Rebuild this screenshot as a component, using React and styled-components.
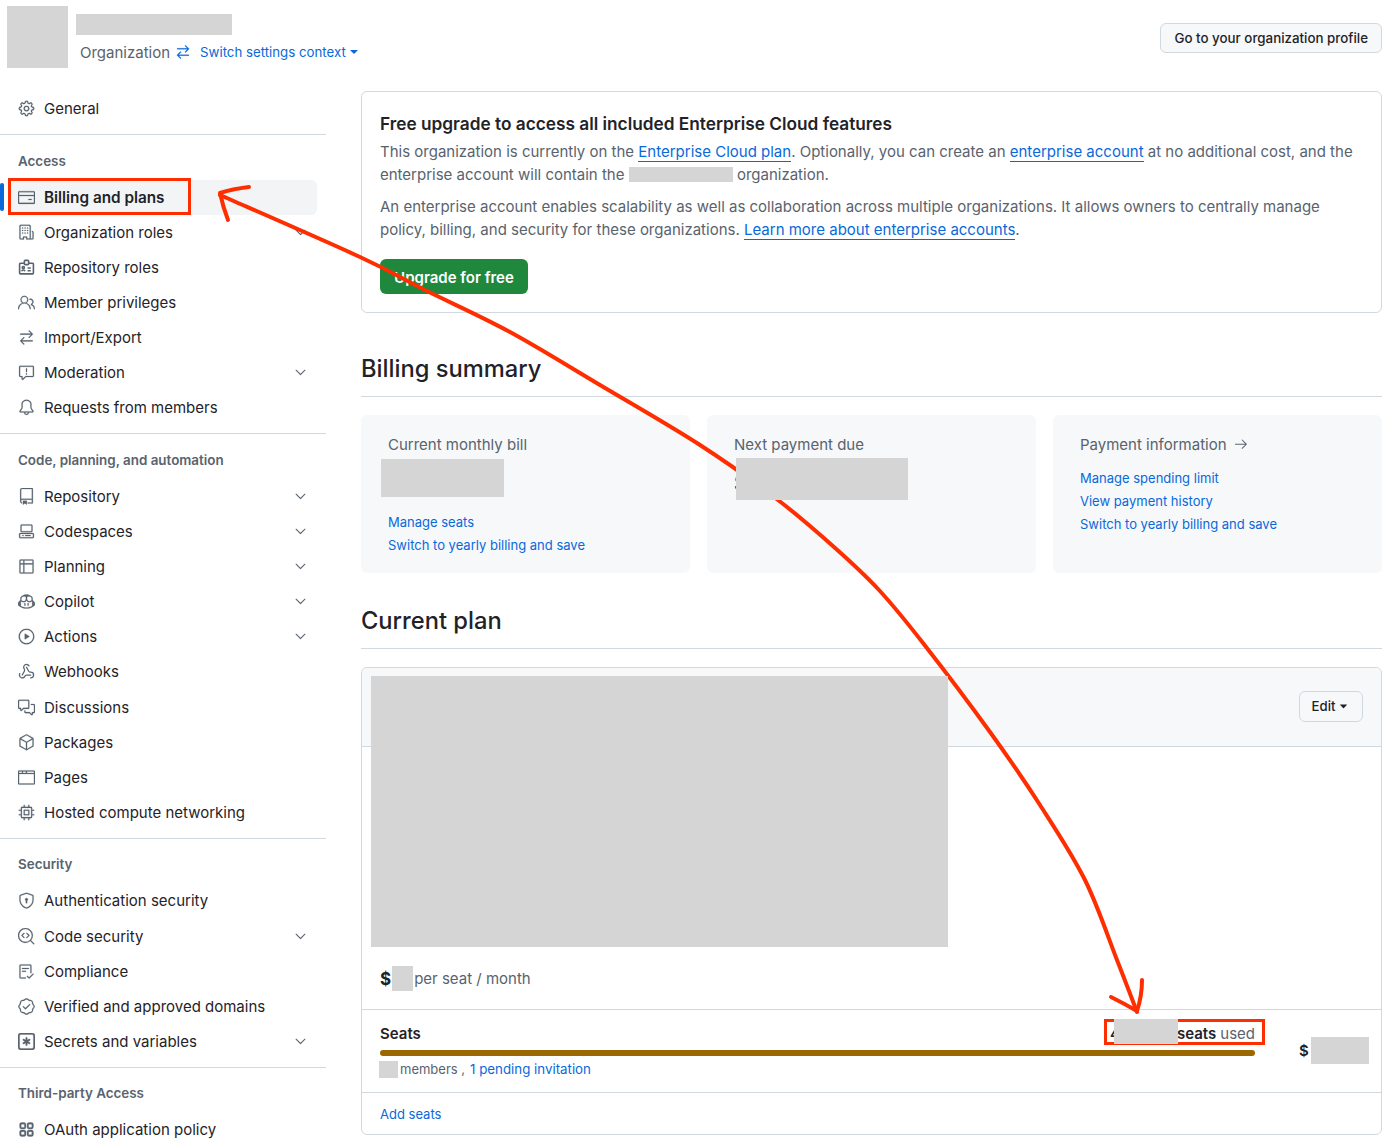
import React from 'react';
import styled, { createGlobalStyle } from 'styled-components';
import { Webhook } from 'lucide-react';
import {
  GoArrowRight,
  GoArrowSwitch,
  GoBell,
  GoBrowser,
  GoChecklist,
  GoChevronDown,
  GoCodescan,
  GoCodespaces,
  GoCommentDiscussion,
  GoCopilot,
  GoCpu,
  GoCreditCard,
  GoGear,
  GoOrganization,
  GoPackage,
  GoPeople,
  GoPlay,
  GoReport,
  GoRepo,
  GoShieldLock,
  GoTable,
  GoTriangleDown,
  GoVerified,
} from 'react-icons/go';

const GlobalStyle = createGlobalStyle`
  body {
    margin: 0;
    background: #fff;
    color: #1f2328;
    font-family: Inter, "Liberation Sans", sans-serif;
    font-size: 15px;
  }
`;

// octicons the icon package does not carry
const AppsIcon = ({ size }) => (
  <svg width={size} height={size} viewBox="0 0 16 16" fill="currentColor">
    <path d="M1.5 3.25c0-.966.784-1.75 1.75-1.75h2.5c.966 0 1.75.784 1.75 1.75v2.5A1.75 1.75 0 0 1 5.75 7.5h-2.5A1.75 1.75 0 0 1 1.5 5.75Zm7 0c0-.966.784-1.75 1.75-1.75h2.5c.966 0 1.75.784 1.75 1.75v2.5a1.75 1.75 0 0 1-1.75 1.75h-2.5A1.75 1.75 0 0 1 8.5 5.75Zm-7 7c0-.966.784-1.75 1.75-1.75h2.5c.966 0 1.75.784 1.75 1.75v2.5a1.75 1.75 0 0 1-1.75 1.75h-2.5a1.75 1.75 0 0 1-1.75-1.75Zm7 0c0-.966.784-1.75 1.75-1.75h2.5c.966 0 1.75.784 1.75 1.75v2.5a1.75 1.75 0 0 1-1.75 1.75h-2.5a1.75 1.75 0 0 1-1.75-1.75ZM3.25 3a.25.25 0 0 0-.25.25v2.5c0 .138.112.25.25.25h2.5A.25.25 0 0 0 6 5.75v-2.5A.25.25 0 0 0 5.75 3Zm7 0a.25.25 0 0 0-.25.25v2.5c0 .138.112.25.25.25h2.5a.25.25 0 0 0 .25-.25v-2.5a.25.25 0 0 0-.25-.25Zm-7 7a.25.25 0 0 0-.25.25v2.5c0 .138.112.25.25.25h2.5a.25.25 0 0 0 .25-.25v-2.5a.25.25 0 0 0-.25-.25Zm7 0a.25.25 0 0 0-.25.25v2.5c0 .138.112.25.25.25h2.5a.25.25 0 0 0 .25-.25v-2.5a.25.25 0 0 0-.25-.25Z" />
  </svg>
);

const KeyAsteriskIcon = ({ size }) => (
  <svg width={size} height={size} viewBox="0 0 16 16" fill="currentColor">
    <path d="M0 2.75A2.75 2.75 0 0 1 2.75 0h10.5A2.75 2.75 0 0 1 16 2.75v10.5A2.75 2.75 0 0 1 13.25 16H2.75A2.75 2.75 0 0 1 0 13.25ZM2.75 1.5c-.69 0-1.25.56-1.25 1.25v10.5c0 .69.56 1.25 1.25 1.25h10.5c.69 0 1.25-.56 1.25-1.25V2.75c0-.69-.56-1.25-1.25-1.25Z" />
    <path d="M8 4a.75.75 0 0 1 .75.75V6.7l1.69-.975a.75.75 0 0 1 .75 1.3L9.5 8l1.69.976a.75.75 0 0 1-.75 1.298L8.75 9.3v1.951a.75.75 0 0 1-1.5 0V9.299l-1.69.976a.75.75 0 0 1-.75-1.3L6.5 8l-1.69-.975a.75.75 0 0 1 .75-1.3l1.69.976V4.75A.75.75 0 0 1 8 4Z" />
  </svg>
);

const IdBadgeIcon = ({ size }) => (
  <svg width={size} height={size} viewBox="0 0 16 16" fill="none" stroke="currentColor" strokeWidth="1.5">
    <path d="M6 4H2.25a.75.75 0 0 0-.75.75v8.5c0 .41.34.75.75.75h11.5c.41 0 .75-.34.75-.75v-8.5a.75.75 0 0 0-.75-.75H10" />
    <rect x="6" y="1.25" width="4" height="4" rx=".75" />
    <circle cx="5" cy="8" r="1" />
    <path d="M3.4 11.6c.3-.9.9-1.2 1.6-1.2s1.3.3 1.6 1.2M9 8.5h3M9 11h3" />
  </svg>
);

const WebhookIcon = ({ size }) => <Webhook size={size} strokeWidth={1.8} />;

// smooth line through the points of a hand-drawn arrow (catmull-rom to bezier)
const smoothPath = (points) => {
  let d = `M${points[0][0]} ${points[0][1]}`;
  for (let i = 0; i < points.length - 1; i++) {
    const p0 = points[i - 1] || points[i];
    const p1 = points[i];
    const p2 = points[i + 1];
    const p3 = points[i + 2] || p2;
    const c1x = p1[0] + (p2[0] - p0[0]) / 6;
    const c1y = p1[1] + (p2[1] - p0[1]) / 6;
    const c2x = p2[0] - (p3[0] - p1[0]) / 6;
    const c2y = p2[1] - (p3[1] - p1[1]) / 6;
    d += ` C${c1x} ${c1y} ${c2x} ${c2y} ${p2[0]} ${p2[1]}`;
  }
  return d;
};

const arrowLine = [
  [220, 195],
  [360, 257],
  [427, 291],
  [510, 332],
  [600, 385],
  [700, 445],
  [778, 500],
  [834, 547],
  [879, 590],
  [923, 643],
  [990, 732],
  [1040, 805],
  [1085, 880],
  [1117, 960],
  [1137, 1012],
];

const navGroups = [
  {
    items: [{ label: 'General', icon: GoGear }],
  },
  {
    title: 'Access',
    items: [
      { label: 'Billing and plans', icon: GoCreditCard, active: true },
      { label: 'Organization roles', icon: GoOrganization, more: true },
      { label: 'Repository roles', icon: IdBadgeIcon },
      { label: 'Member privileges', icon: GoPeople },
      { label: 'Import/Export', icon: GoArrowSwitch },
      { label: 'Moderation', icon: GoReport, more: true },
      { label: 'Requests from members', icon: GoBell },
    ],
  },
  {
    title: 'Code, planning, and automation',
    items: [
      { label: 'Repository', icon: GoRepo, more: true },
      { label: 'Codespaces', icon: GoCodespaces, more: true },
      { label: 'Planning', icon: GoTable, more: true },
      { label: 'Copilot', icon: GoCopilot, more: true },
      { label: 'Actions', icon: GoPlay, more: true },
      { label: 'Webhooks', icon: WebhookIcon },
      { label: 'Discussions', icon: GoCommentDiscussion },
      { label: 'Packages', icon: GoPackage },
      { label: 'Pages', icon: GoBrowser },
      { label: 'Hosted compute networking', icon: GoCpu },
    ],
  },
  {
    title: 'Security',
    items: [
      { label: 'Authentication security', icon: GoShieldLock },
      { label: 'Code security', icon: GoCodescan, more: true },
      { label: 'Compliance', icon: GoChecklist },
      { label: 'Verified and approved domains', icon: GoVerified },
      { label: 'Secrets and variables', icon: KeyAsteriskIcon, more: true },
    ],
  },
  {
    title: 'Third-party Access',
    items: [{ label: 'OAuth application policy', icon: AppsIcon }],
  },
];

const App = () => (
  <Page>
    <GlobalStyle />
    <Header>
      <Avatar />
      <HeaderInfo>
        <OrgName />
        <OrgRow>
          <span>Organization</span>
          <SwitchIcon>
            <GoArrowSwitch size={16} />
          </SwitchIcon>
          <SwitchLink>
            Switch settings context <GoTriangleDown size={14} />
          </SwitchLink>
        </OrgRow>
      </HeaderInfo>
      <ProfileButton>Go to your organization profile</ProfileButton>
    </Header>

    <Layout>
      <Sidebar>
        {navGroups.map((group) => (
          <NavGroup key={group.title || 'top'}>
            {group.title && <NavTitle>{group.title}</NavTitle>}
            {group.items.map(({ label, icon: Icon, active, more }) => (
              <NavRow key={label} $active={active}>
                <NavIcon>
                  <Icon size={17} />
                </NavIcon>
                <NavLabel $active={active}>{label}</NavLabel>
                {more && (
                  <NavChevron>
                    <GoChevronDown size={17} />
                  </NavChevron>
                )}
              </NavRow>
            ))}
          </NavGroup>
        ))}
      </Sidebar>

      <Main>
        <UpgradeBox>
          <UpgradeTitle>Free upgrade to access all included Enterprise Cloud features</UpgradeTitle>
          <Paragraph>
            This organization is currently on the <TextLink>Enterprise Cloud plan</TextLink>.
            Optionally, you can create an <TextLink>enterprise account</TextLink> at no additional
            cost, and the enterprise account will contain the <InlineRedact /> organization.
          </Paragraph>
          <Paragraph>
            An enterprise account enables scalability as well as collaboration across multiple
            organizations. It allows owners to centrally manage policy, billing, and security for
            these organizations. <TextLink>Learn more about enterprise accounts</TextLink>.
          </Paragraph>
          <UpgradeButton>Upgrade for free</UpgradeButton>
        </UpgradeBox>

        <SectionHeading>Billing summary</SectionHeading>
        <SummaryGrid>
          <SummaryCard>
            <CardTitle>Current monthly bill</CardTitle>
            <BillRedact />
            <CardLinks>
              <SmallLink>Manage seats</SmallLink>
              <SmallLink>Switch to yearly billing and save</SmallLink>
            </CardLinks>
          </SummaryCard>
          <SummaryCard>
            <CardTitle>Next payment due</CardTitle>
            <DueValue>
              $<DueRedact />
            </DueValue>
          </SummaryCard>
          <SummaryCard>
            <CardTitle>
              Payment information <GoArrowRight size={16} />
            </CardTitle>
            <PaymentLinks>
              <SmallLink>Manage spending limit</SmallLink>
              <SmallLink>View payment history</SmallLink>
              <SmallLink>Switch to yearly billing and save</SmallLink>
            </PaymentLinks>
          </SummaryCard>
        </SummaryGrid>

        <PlanHeading>Current plan</PlanHeading>
        <PlanBox>
          <PlanRedact />
          <PlanHeader>
            <EditButton>
              Edit <GoTriangleDown size={13} />
            </EditButton>
          </PlanHeader>
          <PlanBody>
            <PriceRow>
              <strong>$</strong>
              <PriceRedact />
              <span>per seat / month</span>
            </PriceRow>
          </PlanBody>
          <SeatsSection>
            <SeatsMain>
              <SeatsTop>
                <strong>Seats</strong>
                <SeatsUsed>
                  <SeatsBox />
                  <strong>4</strong>
                  <SeatsRedact />
                  <strong>seats</strong> <span>used</span>
                </SeatsUsed>
              </SeatsTop>
              <SeatsBar />
              <SeatsNote>
                <MembersRedact />
                members , <NoteLink>1 pending invitation</NoteLink>
              </SeatsNote>
            </SeatsMain>
            <SeatsPrice>
              $<SeatsPriceRedact />
            </SeatsPrice>
          </SeatsSection>
          <PlanFooter>
            <SmallLink>Add seats</SmallLink>
          </PlanFooter>
        </PlanBox>
      </Main>
    </Layout>

    <Annotations viewBox="0 0 1400 1145" fill="none">
      <rect x="9.5" y="179.5" width="180" height="34" stroke="#ff2e00" strokeWidth="3" />
      <path
        d={smoothPath(arrowLine)}
        stroke="#ff2e00"
        strokeWidth="4"
        strokeLinecap="round"
        strokeLinejoin="round"
      />
      <path
        d="M249 187Q232 189 220 193Q223 207 228 220"
        stroke="#ff2e00"
        strokeWidth="4"
        strokeLinecap="round"
        strokeLinejoin="round"
      />
      <path
        d="M1111 997Q1125 1004 1137 1011Q1142 996 1142 980"
        stroke="#ff2e00"
        strokeWidth="4"
        strokeLinecap="round"
        strokeLinejoin="round"
      />
    </Annotations>
  </Page>
);

const Page = styled.div`
  position: relative;
  width: 1400px;
  height: 1145px;
  overflow: hidden;
`;

const Redact = styled.span`
  position: relative;
  z-index: 2;
  display: block;
  background: #d5d5d5;
`;

const Header = styled.header`
  display: flex;
  align-items: flex-start;
  height: 91px;
  box-sizing: border-box;
  padding: 6px 18px 0 7px;
`;

const Avatar = styled(Redact)`
  width: 61px;
  height: 62px;
`;

const HeaderInfo = styled.div`
  flex: 1;
  padding: 8px 0 0 8px;
`;

const OrgName = styled(Redact)`
  width: 156px;
  height: 21px;
`;

const OrgRow = styled.div`
  display: flex;
  align-items: center;
  height: 20px;
  margin-top: 7px;
  padding-left: 4px;
  color: #59636e;
  font-size: 15px;
`;

const SwitchIcon = styled.span`
  display: flex;
  margin: 0 9px 0 5px;
  color: #0969da;
  svg {
    stroke-width: 0.4;
  }
`;

const SwitchLink = styled.a`
  display: flex;
  align-items: center;
  gap: 1px;
  color: #0969da;
  font-size: 13.25px;
`;

const ProfileButton = styled.button`
  height: 30px;
  margin-top: 17px;
  padding: 0 13px;
  border: 1px solid #d1d9e0;
  border-radius: 6px;
  background: #f6f8fa;
  color: #1f2328;
  font-family: inherit;
  font-size: 13.35px;
  font-weight: 500;
`;

const Layout = styled.div`
  display: grid;
  grid-template-columns: 326px 1021px;
  column-gap: 35px;
`;

const Sidebar = styled.nav`
  padding-top: 0.2px;
`;

const NavGroup = styled.div`
  padding-bottom: 8px;
  border-bottom: 1px solid #d1d9e0;
  &:last-child {
    border-bottom: 0;
  }
`;

const NavTitle = styled.h3`
  height: 20px;
  margin: 15.5px 0 9px 18px;
  color: #59636e;
  font-size: 13.4px;
  font-weight: 600;
  line-height: 20px;
`;

const NavRow = styled.a`
  position: relative;
  display: flex;
  align-items: center;
  width: 309px;
  height: 35.1px;
  box-sizing: border-box;
  margin-left: 8px;
  padding: 0 8px 0 10px;
  border-radius: 6px;
  background: ${({ $active }) => ($active ? '#f3f4f6' : 'transparent')};
  ${({ $active }) =>
    $active &&
    `&::before {
      content: '';
      position: absolute;
      left: -8px;
      top: 3px;
      bottom: 4px;
      width: 4px;
      border-radius: 2px;
      background: #0969da;
    }`}
`;

const NavIcon = styled.span`
  display: flex;
  width: 26px;
  color: #59636e;
  svg[fill='currentColor'] {
    stroke: currentColor;
    stroke-width: 0.3;
  }
`;

const NavLabel = styled.span`
  flex: 1;
  font-size: ${({ $active }) => ($active ? '15.3px' : '15px')};
  font-weight: ${({ $active }) => ($active ? 600 : 400)};
`;

const NavChevron = styled.span`
  display: flex;
  color: #59636e;
`;

const Main = styled.main`
  min-width: 0;
`;

const UpgradeBox = styled.section`
  height: 222px;
  box-sizing: border-box;
  padding: 18px;
  border: 1px solid #d1d9e0;
  border-radius: 6px;
`;

const UpgradeTitle = styled.h2`
  margin: 1px 0 2px;
  font-size: 17.25px;
  font-weight: 600;
  line-height: 26px;
`;

const Paragraph = styled.p`
  margin: 0 0 8px;
  padding-top: 1px;
  color: #59636e;
  font-size: 15px;
  line-height: 23px;
`;

const TextLink = styled.a`
  border-bottom: 1px solid #0969da;
  color: #0969da;
`;

const InlineRedact = styled(Redact)`
  display: inline-block;
  width: 104px;
  height: 15px;
  vertical-align: -2px;
`;

const UpgradeButton = styled.button`
  height: 35px;
  width: 148px;
  margin-top: 10px;
  padding: 1px 0 0;
  border: 0;
  border-radius: 6px;
  background: #1f883d;
  color: #fff;
  font-family: inherit;
  font-size: 15px;
  font-weight: 600;
`;

const SectionHeading = styled.h2`
  height: 50px;
  box-sizing: border-box;
  margin: 34px 0 18px;
  border-bottom: 1px solid #d1d9e0;
  font-size: 23.7px;
  font-weight: 500;
  line-height: 43px;
`;

const PlanHeading = styled(SectionHeading)`
  margin-top: 26px;
`;

const SummaryGrid = styled.div`
  display: grid;
  grid-template-columns: repeat(3, 329px);
  column-gap: 17px;
`;

const SummaryCard = styled.div`
  height: 158px;
  box-sizing: border-box;
  padding: 18px 27px;
  border-radius: 6px;
  background: #f6f8fa;
`;

const CardTitle = styled.div`
  display: flex;
  align-items: center;
  gap: 6px;
  height: 22px;
  color: #59636e;
  font-size: 15px;
`;

const BillRedact = styled(Redact)`
  width: 123px;
  height: 38px;
  margin: 4px 0 0 -7px;
`;

const DueValue = styled.div`
  position: relative;
  height: 42px;
  margin-top: 3px;
  font-size: 22px;
  font-weight: 600;
  line-height: 50px;
`;

const DueRedact = styled(Redact)`
  position: absolute;
  left: 2px;
  top: 0;
  width: 172px;
  height: 42px;
`;

const CardLinks = styled.div`
  display: flex;
  flex-direction: column;
  gap: 5px;
  margin-top: 16px;
`;

const PaymentLinks = styled(CardLinks)`
  margin-top: 14px;
`;

const SmallLink = styled.a`
  color: #0969da;
  font-size: 13px;
  line-height: 18px;
`;

const NoteLink = styled(SmallLink)`
  margin-left: 2px;
  font-size: 13.3px;
`;

const PlanBox = styled.section`
  position: relative;
  height: 468px;
  box-sizing: border-box;
  border: 1px solid #d1d9e0;
  border-radius: 6px;
`;

const PlanRedact = styled(Redact)`
  position: absolute;
  left: 9px;
  top: 8px;
  width: 577px;
  height: 271px;
`;

const PlanHeader = styled.div`
  display: flex;
  align-items: center;
  justify-content: flex-end;
  height: 79px;
  box-sizing: border-box;
  padding: 0 18px 2px 0;
  border-bottom: 1px solid #d1d9e0;
  border-radius: 6px 6px 0 0;
  background: #f6f8fa;
`;

const EditButton = styled.button`
  display: flex;
  align-items: center;
  justify-content: center;
  gap: 2px;
  width: 64px;
  height: 31px;
  padding: 0;
  border: 1px solid #d1d9e0;
  border-radius: 6px;
  background: #f6f8fa;
  color: #1f2328;
  font-family: inherit;
  font-size: 13.2px;
  font-weight: 500;
`;

const PlanBody = styled.div`
  display: flex;
  align-items: flex-end;
  height: 262px;
  box-sizing: border-box;
  padding: 0 18px 18px;
`;

const PriceRow = styled.div`
  display: flex;
  align-items: center;
  height: 25px;
  color: #59636e;
  font-size: 15px;
  strong {
    color: #1f2328;
    font-size: 17px;
  }
`;

const PriceRedact = styled(Redact)`
  width: 21px;
  height: 25px;
  margin: 0 1px 0 1px;
`;

const SeatsSection = styled.div`
  display: flex;
  height: 84px;
  box-sizing: border-box;
  padding: 0 12px 0 18px;
  border-top: 1px solid #d1d9e0;
  border-bottom: 1px solid #d1d9e0;
`;

const SeatsMain = styled.div`
  width: 875px;
  padding-top: 11px;
`;

const SeatsTop = styled.div`
  display: flex;
  justify-content: space-between;
  align-items: center;
  height: 24px;
  font-size: 15px;
  strong {
    font-weight: 600;
  }
`;

const SeatsUsed = styled.div`
  position: relative;
  display: flex;
  align-items: center;
  gap: 4px;
  color: #59636e;
  strong {
    color: #1f2328;
  }
`;

const SeatsBox = styled.span`
  position: absolute;
  left: -6px;
  right: -10px;
  top: -4px;
  bottom: -1px;
  border: 3px solid #ff2e00;
`;

const SeatsRedact = styled(Redact)`
  width: 64px;
  height: 25px;
  margin: -4px -5px 0 -10px;
`;

const SeatsBar = styled.div`
  height: 6px;
  margin-top: 5px;
  border-radius: 3px;
  background: #9a6700;
`;

const SeatsNote = styled.div`
  display: flex;
  align-items: center;
  gap: 3px;
  height: 18px;
  margin: 4px 0 0 -1px;
  color: #59636e;
  font-size: 13px;
`;

const MembersRedact = styled(Redact)`
  width: 19px;
  height: 17px;
  margin-right: -1px;
`;

const SeatsPrice = styled.div`
  display: flex;
  align-items: center;
  height: 27px;
  margin: 27px 0 0 44px;
  font-size: 15px;
  font-weight: 600;
`;

const SeatsPriceRedact = styled(Redact)`
  width: 58px;
  height: 27px;
  margin-left: 2px;
`;

const PlanFooter = styled.div`
  display: flex;
  align-items: center;
  height: 42px;
  padding-left: 18px;
`;

const Annotations = styled.svg`
  position: absolute;
  inset: 0;
  z-index: 1;
  width: 1400px;
  height: 1145px;
  pointer-events: none;
`;

export default App;
